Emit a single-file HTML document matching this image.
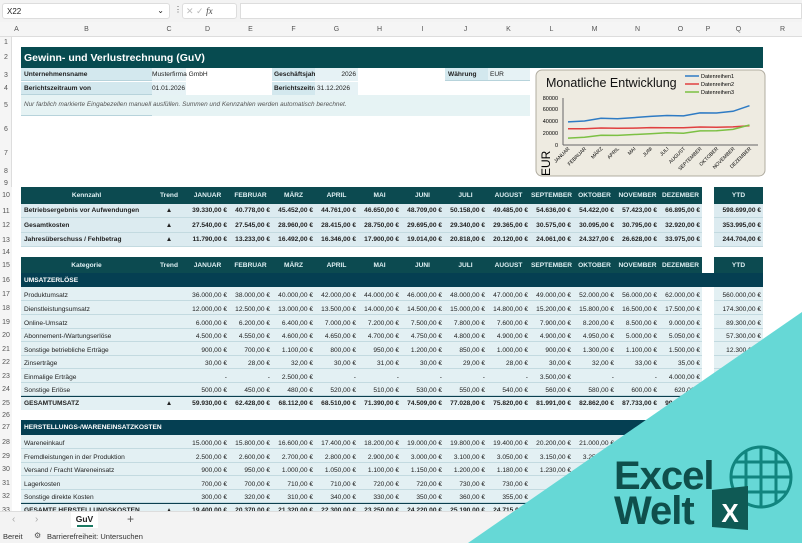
<!DOCTYPE html><html><head><meta charset="utf-8"><style>
*{margin:0;padding:0;box-sizing:border-box}
body{width:802px;height:543px;overflow:hidden;position:relative;background:#fff;font-family:"Liberation Sans",sans-serif;color:#222}
.a{position:absolute}
.r{position:absolute;left:0;width:802px;display:grid;grid-template-columns:12px 9px 131px 34px repeat(12,43px) 12px 49px 39px}
.r>span{overflow:hidden;white-space:nowrap;font-size:6.6px;display:flex;align-items:center}
.r>span:nth-child(n+5){justify-content:flex-end;padding-right:2px}
.r>span:nth-child(3){padding-left:3px}
.r>span:nth-child(4){justify-content:center}
.r>span.n{justify-content:center;color:#555;background:#f5f5f5;font-size:7px;padding:0}
.d>span:nth-child(n+3):nth-child(-n+16),.d>span:nth-child(18){background:#e3f0f3;border-bottom:1px solid #c3dae0;align-items:flex-end;padding-bottom:1px}
.d>span:nth-child(3){align-items:flex-start;padding-top:2px}
.k>span:nth-child(n+3):nth-child(-n+16),.k>span:nth-child(18){background:#dcebf0;border-bottom:1px solid #c3dae0;font-weight:bold}
.h>span:nth-child(n+3):nth-child(-n+16),.h>span:nth-child(18){background:#0c4a50;color:#dff0f3;font-weight:bold;justify-content:center;padding:0}
.t>span:nth-child(n+3):nth-child(-n+16),.t>span:nth-child(18){background:#e3f0f3;border-top:1.5px solid #0c3f4f;font-weight:bold}
.s>span.x{grid-column:3/19;background:#053f52;color:#fff;font-weight:bold;justify-content:flex-start;padding-left:3px}
</style></head><body>
<!-- formula bar -->
<div class="a" style="left:0;top:0;width:802px;height:22px;background:#f3f3f3"></div>
<div class="a" style="left:2px;top:3px;width:168px;height:16px;background:#fff;border:1px solid #ddd;border-radius:3px;font-size:8px;padding:3px 4px">X22<span style="position:absolute;right:5px;top:2px;font-size:8px">⌄</span></div>
<div class="a" style="left:174px;top:5px;font-size:8px;color:#555">⋮</div>
<div class="a" style="left:182px;top:3px;width:55px;height:16px;background:#fff;border:1px solid #ddd;border-radius:3px;font-size:9px;color:#bbb;padding:2px 3px">✕ ✓ <i style="color:#444;font-family:'Liberation Serif',serif">fx</i></div>
<div class="a" style="left:240px;top:3px;width:562px;height:16px;background:#fff;border:1px solid #ddd"></div>
<!-- column headers -->
<div class="r" style="top:22px;height:15px;background:#f5f5f5;border-bottom:1px solid #ddd"><span class=n></span><span class=n>A</span><span class=n style="justify-content:center">B</span><span class=n>C</span><span class=n>D</span><span class=n>E</span><span class=n>F</span><span class=n>G</span><span class=n>H</span><span class=n>I</span><span class=n>J</span><span class=n>K</span><span class=n>L</span><span class=n>M</span><span class=n>N</span><span class=n>O</span><span class=n>P</span><span class=n>Q</span><span class=n>R</span></div>
<div class="a" style="left:0;top:37px;width:12px;height:474px;background:#f5f5f5;border-right:1px solid #ddd"></div>
<!-- row numbers top section -->
<div class="a" style="left:0;top:37px;width:12px;font-size:7px;color:#555;text-align:center;line-height:1">
<div style="position:absolute;top:2px;width:12px">1</div><div style="position:absolute;top:17px;width:12px">2</div><div style="position:absolute;top:35px;width:12px">3</div><div style="position:absolute;top:48px;width:12px">4</div><div style="position:absolute;top:65px;width:12px">5</div><div style="position:absolute;top:89px;width:12px">6</div><div style="position:absolute;top:113px;width:12px">7</div><div style="position:absolute;top:131px;width:12px">8</div><div style="position:absolute;top:143px;width:12px">9</div></div>
<!-- title -->
<div class="a" style="left:21px;top:47px;width:742px;height:21px;background:#074b50;color:#fff;font-weight:bold;font-size:10.5px;padding:5px 3px">Gewinn- und Verlustrechnung (GuV)</div>
<div class="a" style="left:21px;top:68px;width:131px;height:13px;background:#d3e8ee;font-size:6.6px;font-weight:bold;padding:3px 3px;border-bottom:1px solid #b7d3db">Unternehmensname</div>
<div class="a" style="left:152px;top:68px;width:34px;height:13px;background:#e6f2f5;font-size:6.6px;padding:3px 0;white-space:nowrap;overflow:visible">Musterfirma GmbH</div>
<div class="a" style="left:21px;top:82px;width:131px;height:13px;background:#d3e8ee;font-size:6.6px;font-weight:bold;padding:3px 3px;border-bottom:1px solid #b7d3db">Berichtszeitraum von</div>
<div class="a" style="left:152px;top:82px;width:34px;height:13px;background:#e6f2f5;font-size:6.6px;padding:3px 0;white-space:nowrap">01.01.2026</div>
<div class="a" style="left:272px;top:68px;width:43px;height:13px;background:#d3e8ee;font-size:6.6px;font-weight:bold;padding:3px 2px;overflow:hidden;white-space:nowrap">Geschäftsjahr</div>
<div class="a" style="left:315px;top:68px;width:43px;height:13px;background:#e6f2f5;font-size:6.6px;padding:3px 2px;text-align:right">2026</div>
<div class="a" style="left:272px;top:82px;width:43px;height:13px;background:#d3e8ee;font-size:6.6px;font-weight:bold;padding:3px 2px;overflow:hidden;white-space:nowrap">Berichtszeitraum</div>
<div class="a" style="left:315px;top:82px;width:43px;height:13px;background:#e6f2f5;font-size:6.6px;padding:3px 2px;white-space:nowrap">31.12.2026</div>
<div class="a" style="left:445px;top:68px;width:43px;height:13px;background:#d3e8ee;font-size:6.6px;font-weight:bold;padding:3px 3px;border-bottom:1px solid #b7d3db">Währung</div>
<div class="a" style="left:488px;top:68px;width:42px;height:13px;background:#e6f2f5;font-size:6.6px;padding:3px 2px;border-bottom:1px solid #b7d3db">EUR</div>
<div class="a" style="left:21px;top:95px;width:509px;height:21px;background:#e6f3f4;font-size:6.4px;font-style:italic;color:#555;padding:6px 3px;white-space:nowrap">Nur farblich markierte Eingabezellen manuell ausfüllen. Summen und Kennzahlen werden automatisch berechnet.</div>
<div class="a" style="left:21px;top:115px;width:131px;height:1px;background:#b7d3db"></div>
<!-- chart -->
<svg class="a" style="left:535px;top:69px" width="232" height="109" viewBox="535 69 232 109" font-family="Liberation Sans, sans-serif">
<rect x="536" y="70" width="229" height="106" rx="6" fill="#eeebe1" stroke="#b0aca0"/>
<text x="546" y="87" font-size="12.5" fill="#111">Monatliche Entwicklung</text>
<line x1="685" y1="76" x2="699" y2="76" stroke="#2e7bc4" stroke-width="1.5"/><text x="701" y="78" font-size="5.5">Datenreihen1</text>
<line x1="685" y1="84" x2="699" y2="84" stroke="#e04040" stroke-width="1.5"/><text x="701" y="86" font-size="5.5">Datenreihen2</text>
<line x1="685" y1="92" x2="699" y2="92" stroke="#7cc043" stroke-width="1.5"/><text x="701" y="94" font-size="5.5">Datenreihen3</text>
<g font-size="5.5" text-anchor="end"><text x="558" y="100">80000</text><text x="558" y="111">60000</text><text x="558" y="123">40000</text><text x="558" y="135">20000</text><text x="558" y="147">0</text></g>
<line x1="563" y1="98" x2="563" y2="145" stroke="#666" stroke-width="1"/><line x1="563" y1="145" x2="758" y2="145" stroke="#666" stroke-width="1"/>
<polyline fill="none" stroke="#2e7bc4" stroke-width="1.5" points="568,121.9 584.5,121 601,118.3 617.5,118.7 634,117.6 650.5,116.4 667,115.5 683.5,115.9 700,112.9 716.5,113 733,111.3 749.5,105.7"/>
<polyline fill="none" stroke="#e04040" stroke-width="1.5" points="568,128.8 584.5,128.8 601,128 617.5,128.3 634,128.1 650.5,127.6 667,127.8 683.5,127.7 700,127 716.5,127.3 733,126.9 749.5,125.7"/>
<polyline fill="none" stroke="#7cc043" stroke-width="1.5" points="568,138.1 584.5,137.2 601,135.3 617.5,135.4 634,134.5 650.5,133.8 667,132.8 683.5,133.2 700,130.9 716.5,130.7 733,129.4 749.5,125"/>
<g font-size="5" text-anchor="end">
<text transform="translate(570,149) rotate(-45)">JANUAR</text><text transform="translate(586.5,149) rotate(-45)">FEBRUAR</text><text transform="translate(603,149) rotate(-45)">MÄRZ</text><text transform="translate(619.5,149) rotate(-45)">APRIL</text><text transform="translate(636,149) rotate(-45)">MAI</text><text transform="translate(652.5,149) rotate(-45)">JUNI</text><text transform="translate(669,149) rotate(-45)">JULI</text><text transform="translate(685.5,149) rotate(-45)">AUGUST</text><text transform="translate(702,149) rotate(-45)">SEPTEMBER</text><text transform="translate(718.5,149) rotate(-45)">OKTOBER</text><text transform="translate(735,149) rotate(-45)">NOVEMBER</text><text transform="translate(751.5,149) rotate(-45)">DEZEMBER</text></g>
<text transform="translate(550,176) rotate(-90)" font-size="12">EUR</text>
</svg>
<!-- KPI table -->
<div class="r h" style="top:187px;height:17px"><span class=n>10</span><span></span><span style="justify-content:center">Kennzahl</span><span>Trend</span><span>JANUAR</span><span>FEBRUAR</span><span>MÄRZ</span><span>APRIL</span><span>MAI</span><span>JUNI</span><span>JULI</span><span>AUGUST</span><span>SEPTEMBER</span><span>OKTOBER</span><span>NOVEMBER</span><span>DEZEMBER</span><span></span><span>YTD</span><span></span></div>
<div class="r k" style="top:204px;height:14px"><span class=n>11</span><span></span><span>Betriebsergebnis vor Aufwendungen</span><span>▲</span><span>39.330,00 €</span><span>40.778,00 €</span><span>45.452,00 €</span><span>44.761,00 €</span><span>46.650,00 €</span><span>48.709,00 €</span><span>50.158,00 €</span><span>49.485,00 €</span><span>54.636,00 €</span><span>54.422,00 €</span><span>57.423,00 €</span><span>66.895,00 €</span><span></span><span>598.699,00 €</span><span></span></div>
<div class="r k" style="top:218px;height:15px"><span class=n>12</span><span></span><span>Gesamtkosten</span><span>▲</span><span>27.540,00 €</span><span>27.545,00 €</span><span>28.960,00 €</span><span>28.415,00 €</span><span>28.750,00 €</span><span>29.695,00 €</span><span>29.340,00 €</span><span>29.365,00 €</span><span>30.575,00 €</span><span>30.095,00 €</span><span>30.795,00 €</span><span>32.920,00 €</span><span></span><span>353.995,00 €</span><span></span></div>
<div class="r k" style="top:233px;height:14px"><span class=n>13</span><span></span><span>Jahresüberschuss / Fehlbetrag</span><span>▲</span><span>11.790,00 €</span><span>13.233,00 €</span><span>16.492,00 €</span><span>16.346,00 €</span><span>17.900,00 €</span><span>19.014,00 €</span><span>20.818,00 €</span><span>20.120,00 €</span><span>24.061,00 €</span><span>24.327,00 €</span><span>26.628,00 €</span><span>33.975,00 €</span><span></span><span>244.704,00 €</span><span></span></div>
<div class="r" style="top:247px;height:10px"><span class=n>14</span></div>
<div class="r h" style="top:257px;height:16px"><span class=n>15</span><span></span><span style="justify-content:center">Kategorie</span><span>Trend</span><span>JANUAR</span><span>FEBRUAR</span><span>MÄRZ</span><span>APRIL</span><span>MAI</span><span>JUNI</span><span>JULI</span><span>AUGUST</span><span>SEPTEMBER</span><span>OKTOBER</span><span>NOVEMBER</span><span>DEZEMBER</span><span></span><span>YTD</span><span></span></div>
<div class="r s" style="top:273px;height:14px"><span class=n>16</span><span></span><span class=x>UMSATZERLÖSE</span></div>
<div class="r d" style="top:287px;height:14px"><span class=n>17</span><span></span><span>Produktumsatz</span><span></span><span>36.000,00 €</span><span>38.000,00 €</span><span>40.000,00 €</span><span>42.000,00 €</span><span>44.000,00 €</span><span>46.000,00 €</span><span>48.000,00 €</span><span>47.000,00 €</span><span>49.000,00 €</span><span>52.000,00 €</span><span>56.000,00 €</span><span>62.000,00 €</span><span></span><span>560.000,00 €</span><span></span></div>
<div class="r d" style="top:301px;height:14px"><span class=n>18</span><span></span><span>Dienstleistungsumsatz</span><span></span><span>12.000,00 €</span><span>12.500,00 €</span><span>13.000,00 €</span><span>13.500,00 €</span><span>14.000,00 €</span><span>14.500,00 €</span><span>15.000,00 €</span><span>14.800,00 €</span><span>15.200,00 €</span><span>15.800,00 €</span><span>16.500,00 €</span><span>17.500,00 €</span><span></span><span>174.300,00 €</span><span></span></div>
<div class="r d" style="top:315px;height:14px"><span class=n>19</span><span></span><span>Online-Umsatz</span><span></span><span>6.000,00 €</span><span>6.200,00 €</span><span>6.400,00 €</span><span>7.000,00 €</span><span>7.200,00 €</span><span>7.500,00 €</span><span>7.800,00 €</span><span>7.600,00 €</span><span>7.900,00 €</span><span>8.200,00 €</span><span>8.500,00 €</span><span>9.000,00 €</span><span></span><span>89.300,00 €</span><span></span></div>
<div class="r d" style="top:329px;height:13px"><span class=n>20</span><span></span><span>Abonnement-/Wartungserlöse</span><span></span><span>4.500,00 €</span><span>4.550,00 €</span><span>4.600,00 €</span><span>4.650,00 €</span><span>4.700,00 €</span><span>4.750,00 €</span><span>4.800,00 €</span><span>4.900,00 €</span><span>4.900,00 €</span><span>4.950,00 €</span><span>5.000,00 €</span><span>5.050,00 €</span><span></span><span>57.300,00 €</span><span></span></div>
<div class="r d" style="top:342px;height:14px"><span class=n>21</span><span></span><span>Sonstige betriebliche Erträge</span><span></span><span>900,00 €</span><span>700,00 €</span><span>1.100,00 €</span><span>800,00 €</span><span>950,00 €</span><span>1.200,00 €</span><span>850,00 €</span><span>1.000,00 €</span><span>900,00 €</span><span>1.300,00 €</span><span>1.100,00 €</span><span>1.500,00 €</span><span></span><span>12.300,00 €</span><span></span></div>
<div class="r d" style="top:356px;height:13px"><span class=n>22</span><span></span><span>Zinserträge</span><span></span><span>30,00 €</span><span>28,00 €</span><span>32,00 €</span><span>30,00 €</span><span>31,00 €</span><span>30,00 €</span><span>29,00 €</span><span>28,00 €</span><span>30,00 €</span><span>32,00 €</span><span>33,00 €</span><span>35,00 €</span><span></span><span>368,00 €</span><span></span></div>
<div class="r d" style="top:369px;height:14px"><span class=n>23</span><span></span><span>Einmalige Erträge</span><span></span><span>-</span><span>-</span><span>2.500,00 €</span><span>-</span><span>-</span><span>-</span><span>-</span><span>-</span><span>3.500,00 €</span><span>-</span><span>-</span><span>4.000,00 €</span><span></span><span>10.000,00 €</span><span></span></div>
<div class="r d" style="top:383px;height:13px"><span class=n>24</span><span></span><span>Sonstige Erlöse</span><span></span><span>500,00 €</span><span>450,00 €</span><span>480,00 €</span><span>520,00 €</span><span>510,00 €</span><span>530,00 €</span><span>550,00 €</span><span>540,00 €</span><span>560,00 €</span><span>580,00 €</span><span>600,00 €</span><span>620,00 €</span><span></span><span>6.440,00 €</span><span></span></div>
<div class="r t" style="top:396px;height:14px"><span class=n>25</span><span></span><span>GESAMTUMSATZ</span><span>▲</span><span>59.930,00 €</span><span>62.428,00 €</span><span>68.112,00 €</span><span>68.510,00 €</span><span>71.390,00 €</span><span>74.509,00 €</span><span>77.028,00 €</span><span>75.820,00 €</span><span>81.991,00 €</span><span>82.862,00 €</span><span>87.733,00 €</span><span>99.705,00 €</span><span></span><span>909.708,00 €</span><span></span></div>
<div class="r" style="top:410px;height:10px"><span class=n>26</span></div>
<div class="r s" style="top:420px;height:15px"><span class=n>27</span><span></span><span class=x>HERSTELLUNGS-/WARENEINSATZKOSTEN</span></div>
<div class="r d" style="top:435px;height:14px"><span class=n>28</span><span></span><span>Wareneinkauf</span><span></span><span>15.000,00 €</span><span>15.800,00 €</span><span>16.600,00 €</span><span>17.400,00 €</span><span>18.200,00 €</span><span>19.000,00 €</span><span>19.800,00 €</span><span>19.400,00 €</span><span>20.200,00 €</span><span>21.000,00 €</span><span></span><span></span><span></span><span></span><span></span></div>
<div class="r d" style="top:449px;height:14px"><span class=n>29</span><span></span><span>Fremdleistungen in der Produktion</span><span></span><span>2.500,00 €</span><span>2.600,00 €</span><span>2.700,00 €</span><span>2.800,00 €</span><span>2.900,00 €</span><span>3.000,00 €</span><span>3.100,00 €</span><span>3.050,00 €</span><span>3.150,00 €</span><span>3.250,00 €</span><span></span><span></span><span></span><span></span><span></span></div>
<div class="r d" style="top:463px;height:13px"><span class=n>30</span><span></span><span>Versand / Fracht Wareneinsatz</span><span></span><span>900,00 €</span><span>950,00 €</span><span>1.000,00 €</span><span>1.050,00 €</span><span>1.100,00 €</span><span>1.150,00 €</span><span>1.200,00 €</span><span>1.180,00 €</span><span>1.230,00 €</span><span></span><span></span><span></span><span></span><span></span><span></span></div>
<div class="r d" style="top:476px;height:14px"><span class=n>31</span><span></span><span>Lagerkosten</span><span></span><span>700,00 €</span><span>700,00 €</span><span>710,00 €</span><span>710,00 €</span><span>720,00 €</span><span>720,00 €</span><span>730,00 €</span><span>730,00 €</span><span></span><span></span><span></span><span></span><span></span><span></span><span></span></div>
<div class="r d" style="top:490px;height:13px"><span class=n>32</span><span></span><span>Sonstige direkte Kosten</span><span></span><span>300,00 €</span><span>320,00 €</span><span>310,00 €</span><span>340,00 €</span><span>330,00 €</span><span>350,00 €</span><span>360,00 €</span><span>355,00 €</span><span></span><span></span><span></span><span></span><span></span><span></span><span></span></div>
<div class="r t" style="top:503px;height:14px"><span class=n>33</span><span></span><span>GESAMTE HERSTELLUNGSKOSTEN</span><span>▲</span><span>19.400,00 €</span><span>20.370,00 €</span><span>21.320,00 €</span><span>22.300,00 €</span><span>23.250,00 €</span><span>24.220,00 €</span><span>25.190,00 €</span><span>24.715,00 €</span><span></span><span></span><span></span><span></span><span></span><span></span><span></span></div>
<!-- tab bar + status -->
<div class="a" style="left:0;top:511px;width:802px;height:19px;background:#f3f3f3;border-top:1px solid #ddd"></div>
<div class="a" style="left:12px;top:514px;font-size:10px;color:#aaa">‹</div>
<div class="a" style="left:35px;top:514px;font-size:10px;color:#aaa">›</div>
<div class="a" style="left:71px;top:512px;width:27px;height:16px;background:#fff;font-size:8.5px;font-weight:bold;text-align:center;padding-top:2px">GuV<div style="margin:1px auto 0;width:16px;height:1.5px;background:#1b7a63"></div></div>
<div class="a" style="left:127px;top:512px;font-size:12px;color:#555">+</div>
<div class="a" style="left:0;top:530px;width:802px;height:13px;background:#f3f3f3"></div>
<div class="a" style="left:3px;top:532px;font-size:7.5px;color:#333">Bereit</div>
<div class="a" style="left:34px;top:531px;font-size:8px;color:#555">⚙</div>
<div class="a" style="left:47px;top:532px;font-size:7.5px;color:#333">Barrierefreiheit: Untersuchen</div>
<!-- overlay logo -->
<svg class="a" style="left:0;top:0" width="802" height="543" viewBox="0 0 802 543">
<polygon points="802,312 468,543 802,543" fill="#66d8d6"/>
<text x="614" y="489" font-size="40" font-weight="bold" fill="#0f4f4c" font-family="Liberation Sans, sans-serif" letter-spacing="-1">Excel</text>
<text x="614" y="524" font-size="40" font-weight="bold" fill="#0f4f4c" font-family="Liberation Sans, sans-serif" letter-spacing="-1">Welt</text>
<g stroke="#11857f" stroke-width="3" fill="none">
<circle cx="761" cy="477" r="30"/>
<line x1="731" y1="477" x2="791" y2="477"/><line x1="735" y1="462" x2="787" y2="462"/><line x1="735" y1="492" x2="787" y2="492"/>
<line x1="761" y1="447" x2="761" y2="507"/><line x1="746" y1="451" x2="746" y2="503"/><line x1="776" y1="451" x2="776" y2="503"/>
</g>
<polygon points="712,490 748,486 748,530 712,527" fill="#0f5a55"/>
<text x="730" y="522" font-size="26" font-weight="bold" fill="#fff" text-anchor="middle" font-family="Liberation Sans, sans-serif">X</text>
</svg>
</body></html>
